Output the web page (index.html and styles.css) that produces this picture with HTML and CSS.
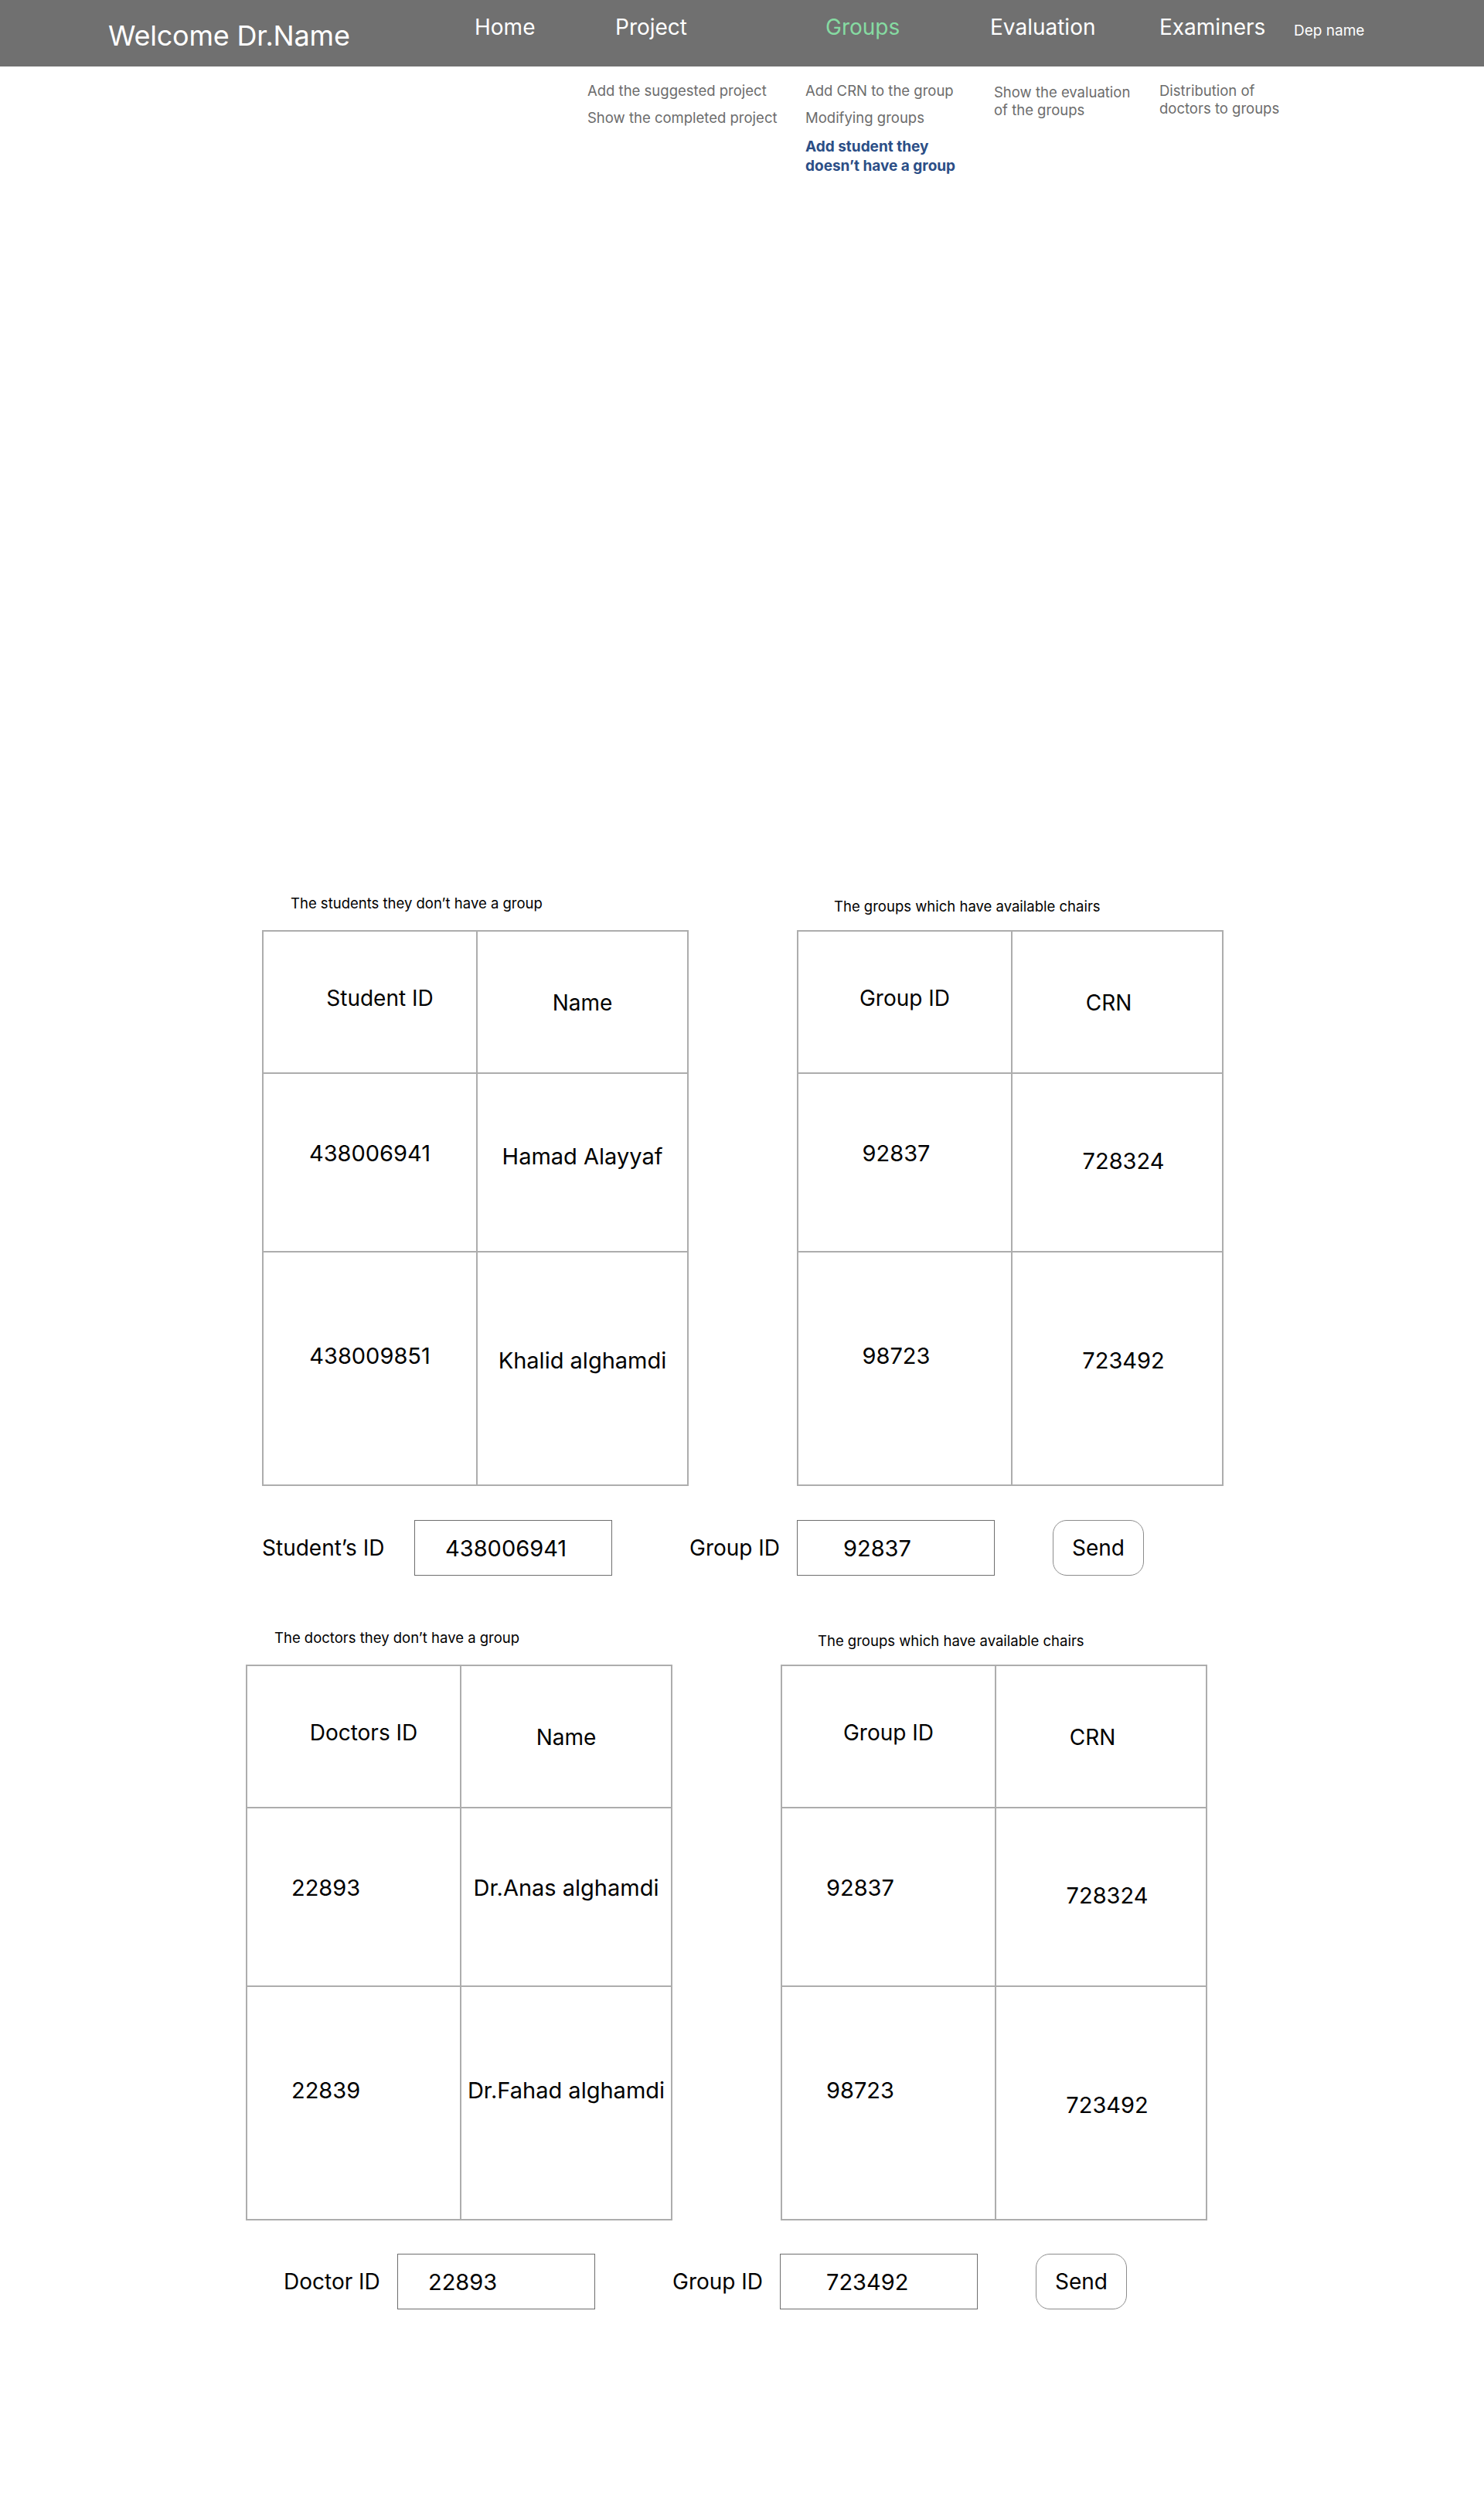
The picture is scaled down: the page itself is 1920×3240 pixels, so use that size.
FILE: index.html
```html
<!DOCTYPE html>
<html lang="en">
<head>
  <meta charset="UTF-8" />
  <meta name="viewport" content="width=device-width, initial-scale=1" />
  <title>Groups - Add student</title>
  <link rel="stylesheet" href="styles.css">
</head>
<body>
  <header class="topbar">
    <div class="brand">Welcome Dr.Name</div>
    <nav class="menu">
      <a class="menu-link home" href="#">Home</a>
      <a class="menu-link project" href="#">Project</a>
      <a class="menu-link groups active" href="#">Groups</a>
      <a class="menu-link evaluation" href="#">Evaluation</a>
      <a class="menu-link examiners" href="#">Examiners</a>
    </nav>
    <span class="dep">Dep name</span>
  </header>

  <!-- sub menus under each tab -->
  <div class="subnav">
    <div class="subcol col-project">
      <a href="#">Add the suggested project</a>
      <a href="#">Show the completed project</a>
    </div>
    <div class="subcol col-groups">
      <a href="#">Add CRN to the group</a>
      <a href="#">Modifying groups</a>
      <a href="#" class="current">Add student they<br>doesn’t have a group</a>
    </div>
    <div class="subcol col-evaluation">
      <a href="#">Show the evaluation<br>of the groups</a>
    </div>
    <div class="subcol col-examiners">
      <a href="#">Distribution of<br>doctors to groups</a>
    </div>
  </div>

  <main>
    <section class="assign students">
      <div class="pair">
        <div class="block block-left">
          <p class="caption">The students they don’t have a group</p>
          <table class="grid">
            <tr class="head"><th class="shift">Student ID</th><th class="low">Name</th></tr>
            <tr class="r1"><td>438006941</td><td class="low">Hamad Alayyaf</td></tr>
            <tr class="r2"><td>438009851</td><td class="low">Khalid alghamdi</td></tr>
          </table>
        </div>
        <div class="block block-right">
          <p class="caption">The groups which have available chairs</p>
          <table class="grid">
            <tr class="head"><th>Group ID</th><th class="low back">CRN</th></tr>
            <tr class="r1"><td class="back">92837</td><td class="lower on">728324</td></tr>
            <tr class="r2"><td class="back">98723</td><td class="low on">723492</td></tr>
          </table>
        </div>
      </div>
      <form class="assign-row">
        <label class="label-main" for="studentId">Student’s ID</label>
        <input class="id-box" id="studentId" type="text" value="438006941">
        <label class="label-group" for="groupId1">Group ID</label>
        <input class="id-box second" id="groupId1" type="text" value="92837">
        <button class="send" type="submit">Send</button>
      </form>
    </section>

    <section class="assign doctors">
      <div class="pair">
        <div class="block block-left">
          <p class="caption">The doctors they don’t have a group</p>
          <table class="grid">
            <tr class="head"><th class="shift">Doctors ID</th><th class="low">Name</th></tr>
            <tr class="r1"><td class="left">22893</td><td>Dr.Anas alghamdi</td></tr>
            <tr class="r2"><td class="left">22839</td><td>Dr.Fahad alghamdi</td></tr>
          </table>
        </div>
        <div class="block block-right">
          <p class="caption">The groups which have available chairs</p>
          <table class="grid">
            <tr class="head"><th>Group ID</th><th class="low back">CRN</th></tr>
            <tr class="r1"><td class="left">92837</td><td class="lower on">728324</td></tr>
            <tr class="r2"><td class="left">98723</td><td class="lowest on">723492</td></tr>
          </table>
        </div>
      </div>
      <form class="assign-row">
        <label class="label-main" for="doctorId">Doctor ID</label>
        <input class="id-box" id="doctorId" type="text" value="22893">
        <label class="label-group" for="groupId2">Group ID</label>
        <input class="id-box second" id="groupId2" type="text" value="723492">
        <button class="send" type="submit">Send</button>
      </form>
    </section>
  </main>
</body>
</html>
```

FILE: styles.css
```css
body {
  margin: 0;
  background: #fff;
  color: #000;
  font-family: Inter, "Liberation Sans", sans-serif;
}
a {
  text-decoration: none;
}

/* top bar */
.topbar {
  display: flex;
  align-items: flex-start;
  height: 86px;
  padding-left: 140px;
  background: #707070;
  color: #fff;
}
.brand {
  width: 474px;
  margin-top: 24px;
  font-size: 36px;
  line-height: 44px;
  letter-spacing: -0.2px;
}
.menu {
  display: flex;
}
.menu-link {
  margin-top: 18px;
  font-size: 28px;
  line-height: 34px;
  color: #fff;
}
.home { width: 182px; }
.project { width: 272px; }
.groups { width: 213px; }
.evaluation { width: 219px; }
.examiners { width: 174px; }
.menu-link.active {
  color: #86dba2;
}
.dep {
  margin-top: 28px;
  font-size: 19px;
  line-height: 24px;
}

/* sub menus */
.subnav {
  display: flex;
  box-sizing: border-box;
  height: 140px;
  padding: 20px 0 0 760px;
}
.subcol {
  display: flex;
  flex-direction: column;
  gap: 12px;
}
.subcol a {
  font-size: 18.5px;
  line-height: 23px;
  color: #6c6c6c;
}
.col-project { width: 282px; }
.col-groups { width: 244px; }
.col-evaluation { width: 214px; padding-top: 2px; }
.subcol a.current {
  margin-top: 1px;
  font-size: 19px;
  font-weight: 700;
  line-height: 25px;
  color: #2b4e86;
}

/* tables */
.assign.students {
  margin: 931px 0 0 339px;
}
.assign.doctors {
  margin: 69px 0 0 318px;
}
.pair {
  display: flex;
  gap: 140px;
}
.caption {
  margin: 0 0 24px 37px;
  font-size: 18.5px;
  line-height: 22px;
}
.block-right .caption {
  margin: 4px 0 20px 48px;
}
.grid {
  width: 552px;
  border-collapse: collapse;
  table-layout: fixed;
}
.grid th,
.grid td {
  border: 2px solid #adadad;
  padding: 0;
  vertical-align: top;
  text-align: center;
  font-weight: 400;
  line-height: 34px;
}
.grid th {
  font-size: 28px;
}
.grid td {
  font-size: 29px;
}
.grid th:first-child {
  width: 275px;
}
.grid tr.head { height: 184px; }
.grid tr.r1 { height: 231px; }
.grid tr.r2 { height: 302px; }
.grid tr.head th { padding-top: 69px; }
.grid tr.r1 td { padding-top: 86px; }
.grid tr.r2 td { padding-top: 117px; }
.grid tr.head th.low { padding-top: 75px; }
.grid tr.r1 td.low { padding-top: 90px; }
.grid tr.r1 td.lower { padding-top: 96px; }
.grid tr.r2 td.low { padding-top: 123px; }
.grid tr.r2 td.lowest { padding-top: 136px; }
.grid .shift {
  text-indent: 26px;
}
.grid .back {
  text-indent: -22px;
}
.grid .on {
  text-indent: 16px;
}
.grid td.left {
  text-align: left;
  text-indent: 0;
  padding-left: 57px;
}

/* assign form */
.assign-row {
  display: flex;
  align-items: center;
  margin-top: 44px;
}
.doctors .assign-row {
  margin-top: 43px;
  padding-left: 49px;
}
.assign-row label {
  font-size: 28px;
  line-height: 34px;
}
.label-main {
  width: 197px;
}
.doctors .label-main {
  width: 147px;
}
.label-group {
  width: 139px;
  margin-left: 100px;
}
.id-box {
  box-sizing: border-box;
  width: 256px;
  height: 72px;
  padding: 0 0 0 39px;
  border: 1px solid #6e6e6e;
  border-radius: 0;
  font-family: inherit;
  font-size: 29px;
  color: #000;
  background: #fff;
}
.id-box.second {
  padding-left: 59px;
}
.send {
  box-sizing: border-box;
  width: 118px;
  height: 72px;
  margin-left: 75px;
  border: 1px solid #8c8c8c;
  border-radius: 18px;
  background: #fff;
  font-family: inherit;
  font-size: 28px;
  color: #000;
  cursor: pointer;
}
```
